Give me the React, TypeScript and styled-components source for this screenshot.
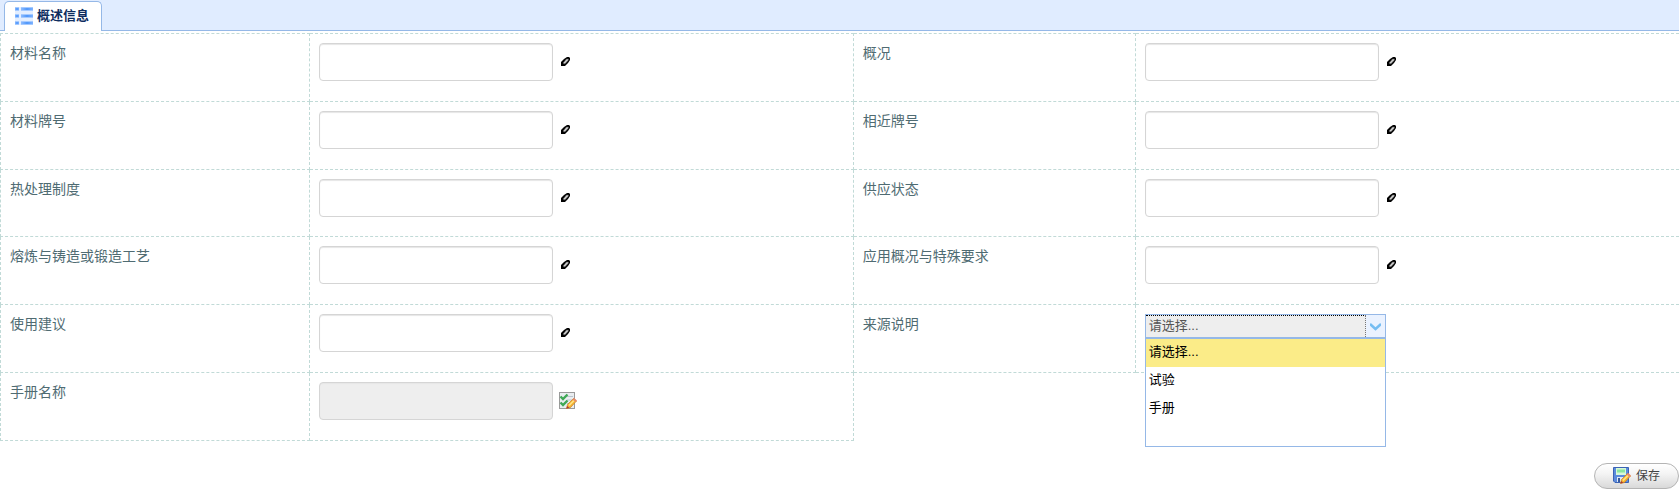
import React, { useState } from "react";
import styled, { createGlobalStyle } from "styled-components";

const GlobalStyle = createGlobalStyle`
  *, *::before, *::after { box-sizing: border-box; }
  body {
    margin: 0;
    background: #fff;
    font-family: "Liberation Sans", "Noto Sans CJK SC", sans-serif;
    font-size: 14px;
    line-height: 20px;
    overflow-x: hidden;
  }
`;

const line = "1px dashed #c1dad7";

const TabBar = styled.header`
  display: flex;
  align-items: flex-end;
  height: 31px;
  padding-left: 4px;
  background: #e0ecff;
  border-bottom: 1px solid #95b8e7;
`;

const Tab = styled.button`
  display: flex;
  align-items: center;
  gap: 4px;
  height: 30px;
  margin-bottom: -1px;
  padding: 0 12px 2px 10px;
  background: #fff;
  border: 1px solid #95b8e7;
  border-bottom: 0;
  border-radius: 5px 5px 0 0;
  color: #0e2d5f;
  font: bold 13px/20px "Liberation Sans", "Noto Sans CJK SC", sans-serif;
`;

const Sheet = styled.table`
  width: 100%;
  height: 408px;
  margin-top: 2px;
  border-collapse: collapse;
  table-layout: fixed;
`;

const LabelCell = styled.th`
  padding: 9px;
  border: ${line};
  color: #4f6b72;
  font-weight: normal;
  text-align: left;
  vertical-align: top;
`;

const FieldCell = styled.td<{ $last?: boolean }>`
  padding: 9px;
  border: ${line};
  border-right-style: ${(p) => (p.$last ? "none" : "dashed")};
  vertical-align: top;
`;

const Field = styled.div`
  display: flex;
  align-items: center;
  gap: 6px;
`;

const TextBox = styled.input`
  width: 234px;
  height: 38px;
  padding: 4px 6px;
  border: 1px solid #d5d5d5;
  border-radius: 4px;
  background: #fff;
  box-shadow: inset 0 1px 1px #e6e6e6;
  font: inherit;
  &:read-only { background: #eee; }
`;

const IconButton = styled.button`
  display: flex;
  padding: 0;
  border: 0;
  background: none;
`;

const Combo = styled.div`
  position: relative;
  width: 241px;
  font-size: 13px;
`;

const ComboButton = styled.button`
  display: flex;
  width: 100%;
  height: 24px;
  padding: 0;
  border: 1px solid #95b8e7;
  background: #eaf2ff;
  color: #555;
  font: inherit;
  text-align: left;
`;

const ComboValue = styled.span`
  flex: 1;
  height: 22px;
  padding-left: 3px;
  border-top: 1px dotted #000;
  border-right: 1px dotted #777;
  background: #eee;
`;

const ComboArrow = styled.svg`
  margin: 6px 4px 0;
`;

const Menu = styled.ul`
  position: absolute;
  top: 24px;
  left: 0;
  z-index: 1;
  width: 100%;
  height: 109px;
  margin: 0;
  padding: 0;
  border: 1px solid #95b8e7;
  background: #fff;
  list-style: none;
`;

const Option = styled.li<{ $active: boolean }>`
  height: 28px;
  padding-left: 3px;
  background: ${(p) => (p.$active ? "#fbec88" : "#fff")};
  color: #000;
  line-height: 26px;
`;

const Actions = styled.footer`
  display: flex;
  justify-content: flex-end;
  margin-top: 22px;
`;

const SaveButton = styled.button`
  display: flex;
  align-items: center;
  gap: 5px;
  height: 26px;
  padding: 0 18px;
  border: 1px solid #b4b4b4;
  border-radius: 13px;
  background: linear-gradient(#fff, #f4f4f4 40%, #d9d9d9);
  color: #444;
  font: 12px/20px "Liberation Sans", "Noto Sans CJK SC", sans-serif;
`;

const ListIcon = () => (
  <svg width="18" height="18" viewBox="0 0 18 18" aria-hidden="true">
    <defs>
      <linearGradient id="bar" x1="0" y1="0" x2="1" y2="0">
        <stop offset="0" stopColor="#8dbcff" />
        <stop offset=".5" stopColor="#4f97fb" />
        <stop offset="1" stopColor="#7fb3ff" />
      </linearGradient>
    </defs>
    <rect width="18" height="18" fill="#e3eeff" />
    {[0, 7, 14].map((y) => (
      <g key={y}>
        <rect x="0" y={y} width="4" height="4" fill="#a5caff" />
        <rect x="6" y={y} width="12" height="4" fill="#a5caff" />
        <rect x="0" y={y + 1} width="4" height="2" fill="url(#bar)" />
        <rect x="6" y={y + 1} width="12" height="2" fill="url(#bar)" />
      </g>
    ))}
  </svg>
);

const PenIcon = () => (
  <svg width="14" height="14" viewBox="0 0 14 14" aria-hidden="true">
    <path d="M2 7 5 4 8 2h2l1 1v2L9 8l-3 3H2z" fill="#000" />
    <path d="M4.500 7.500 7.500 4 9.500 4 9 5.500 6 8.800 4.500 8.800z" fill="#d0d0d0" stroke="#555" strokeWidth=".5" />
  </svg>
);

const Pencil = () => (
  <>
    <path d="M7.500 16.500 8.500 12.500 14.500 6.500 17.500 9 11.500 15.500z" fill="#f6b632" stroke="#c77a20" strokeWidth=".7" />
    <path d="M9.500 13 15 7.500l1 1L10.500 14z" fill="#ffe68a" />
    <path d="m13.500 7.500 1.500-1.500 3 2.500-1.500 1.500z" fill="#e98a6c" />
    <path d="m7.500 16.500.7-2.500 2 1.800z" fill="#a33" />
  </>
);

const ChecklistIcon = () => (
  <svg width="18" height="18" viewBox="0 0 18 18" aria-hidden="true">
    <rect x=".5" y=".5" width="15" height="16" fill="#e9edf0" stroke="#9a9a9a" />
    <path d="M8 4.500h6M8 8h5M8 11.500h3" stroke="#b9c3cc" />
    <path d="M1.500 4.500 4 7l4.500-4.500M1.500 10.500 4 13l4.500-4.500" fill="none" stroke="#3fa856" strokeWidth="2.400" />
    <Pencil />
  </svg>
);

const SaveIcon = () => (
  <svg width="18" height="18" viewBox="0 0 18 18" aria-hidden="true">
    <path d="M.5.5h15v15H2l-1.500-1.500z" fill="#5b8bdc" stroke="#3a63b5" />
    <rect x="3" y="1" width="10" height="7" fill="#d8f8d8" />
    <path d="M4 2.500h8v3H4z" fill="#8be6a0" />
    <path d="M4 10h8v5H4z" fill="#dfe8f5" />
    <path d="M5 11h2v4H5z" fill="#35599d" />
    <Pencil />
  </svg>
);

type Kind = "text" | "pick" | "combo";
type Item = { id: string; label: string; kind: Kind };

const item = (id: string, label: string, kind: Kind = "text"): Item => ({ id, label, kind });

const rows: Item[][] = [
  [item("name", "材料名称"), item("overview", "概况")],
  [item("grade", "材料牌号"), item("similar", "相近牌号")],
  [item("heat", "热处理制度"), item("supply", "供应状态")],
  [item("process", "熔炼与铸造或锻造工艺"), item("usage", "应用概况与特殊要求")],
  [item("advice", "使用建议"), item("source", "来源说明", "combo")],
  [item("manual", "手册名称", "pick")],
];

const options = ["请选择...", "试验", "手册"];

function SourceCombo({ id }: { id: string }) {
  const [open, setOpen] = useState(true);
  const [value, setValue] = useState(options[0]);
  return (
    <Combo>
      <ComboButton id={id} type="button" role="combobox" aria-expanded={open} aria-controls="source-menu" onClick={() => setOpen(!open)}>
        <ComboValue>{value}</ComboValue>
        <ComboArrow width="11" height="11" viewBox="0 0 11 11" aria-hidden="true">
          <path d="m0 3 5.500 5L11 3" fill="none" stroke="#75bdf2" strokeWidth="2.500" />
        </ComboArrow>
      </ComboButton>
      {open && (
        <Menu id="source-menu" role="listbox">
          {options.map((o) => (
            <Option key={o} role="option" aria-selected={o === value} $active={o === value} onClick={() => { setValue(o); setOpen(false); }}>
              {o}
            </Option>
          ))}
        </Menu>
      )}
    </Combo>
  );
}

function FieldInput({ id, label, kind }: Item) {
  if (kind === "combo") return <SourceCombo id={id} />;
  return (
    <Field>
      <TextBox id={id} type="text" readOnly={kind === "pick"} />
      <IconButton type="button" aria-label={label}>
        {kind === "pick" ? <ChecklistIcon /> : <PenIcon />}
      </IconButton>
    </Field>
  );
}

const Column = styled.col<{ $share?: string }>`
  width: ${(p) => p.$share ?? "auto"};
`;

export default function App() {
  return (
    <>
      <GlobalStyle />
      <TabBar>
        <Tab type="button">
          <ListIcon />
          概述信息
        </Tab>
      </TabBar>
      <form onSubmit={(e) => e.preventDefault()}>
        <Sheet>
          <colgroup>
            <Column $share="18.4%" />
            <Column $share="32.4%" />
            <Column $share="16.8%" />
            <Column />
          </colgroup>
          <tbody>
            {rows.map((cells) => (
              <tr key={cells[0].id}>
                {cells.map((cell, i) => (
                  <React.Fragment key={cell.id}>
                    <LabelCell scope="row">
                      <label htmlFor={cell.id}>{cell.label}</label>
                    </LabelCell>
                    <FieldCell $last={i === 1}>
                      <FieldInput {...cell} />
                    </FieldCell>
                  </React.Fragment>
                ))}
              </tr>
            ))}
          </tbody>
        </Sheet>
        <Actions>
          <SaveButton type="submit">
            <SaveIcon />
            保存
          </SaveButton>
        </Actions>
      </form>
    </>
  );
}
